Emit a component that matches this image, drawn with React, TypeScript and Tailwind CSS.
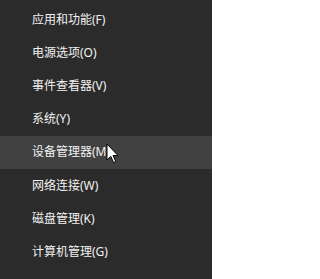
const items = [
  "应用和功能(F)",
  "电源选项(O)",
  "事件查看器(V)",
  "系统(Y)",
  "设备管理器(M)",
  "网络连接(W)",
  "磁盘管理(K)",
  "计算机管理(G)",
];

function Cursor() {
  return (
    <svg
      className="absolute left-[106px] top-[143px]"
      width="13"
      height="21"
      viewBox="0 0 13 21"
    >
      <path
        d="M1 1 L1 17 L4.8 13.4 L7.6 19.6 L9.8 18.6 L7.1 12.6 L12 12.6 Z"
        fill="#ffffff"
        stroke="#000000"
        strokeWidth="1"
        strokeLinejoin="miter"
      />
    </svg>
  );
}

export default function App() {
  return (
    <div className="relative w-[212px] h-[279px] bg-[#2b2b2b] pt-[3px] overflow-hidden">
      <ul className="flex flex-col">
        {items.map((label, i) => (
          <li
            key={label}
            className={
              "h-[33.2px] flex items-center pl-[32px] text-[12px] text-[#f2f2f2] " +
              (i === 4 ? "bg-[#414141]" : "")
            }
            style={{ fontFamily: '"Noto Sans", "Noto Sans CJK SC", sans-serif' }}
          >
            {label}
          </li>
        ))}
      </ul>
      <Cursor />
    </div>
  );
}
